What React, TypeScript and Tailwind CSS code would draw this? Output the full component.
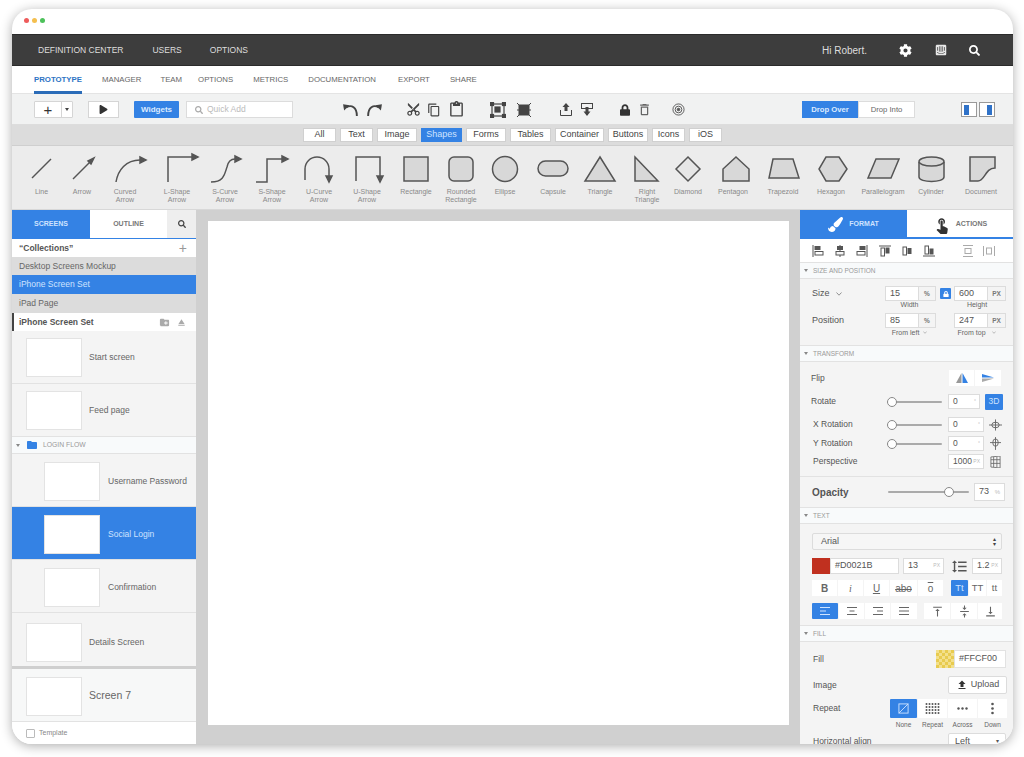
import { ReactNode } from "react";
import { FaCog, FaIntercom, FaLock, FaPaintBrush, FaPlay, FaSearch } from "react-icons/fa";
import {
  MdContentCopy,
  MdContentCut,
  MdContentPaste,
  MdCreateNewFolder,
  MdDeleteOutline,
  MdEject,
  MdFileUpload,
  MdFolder,
  MdFormatLineSpacing,
  MdTouchApp,
  MdVerticalAlignBottom,
  MdVerticalAlignCenter,
  MdVerticalAlignTop,
} from "react-icons/md";

const shapes: { label: string[]; w: string; art: ReactNode }[] = [
  { label: ["Line"], w: "w-[41px]", art: <path d="M20 26L39 7" fill="none" /> },
  { label: ["Arrow"], w: "w-[40px]", art: <><path d="M21 27L39 9" fill="none" /><polygon points="42,6 39,12 36,9" fill="#555" /></> },
  { label: ["Curved", "Arrow"], w: "w-[46px]", art: <><path d="M21 30C23 18 31 8 45 8" fill="none" /><polygon points="45,5 51,8 45,11" fill="#555" /></> },
  { label: ["L-Shape", "Arrow"], w: "w-[58px]", art: <><path d="M21 30V5H45" fill="none" /><polygon points="45,2 51,5 45,8" fill="#555" /></> },
  { label: ["S-Curve", "Arrow"], w: "w-[38px]", art: <><path d="M16 30C30 30 30 20 32 15C33 10 35 7 40 7" fill="none" /><polygon points="40,4 46,7 40,10" fill="#555" /></> },
  { label: ["S-Shape", "Arrow"], w: "w-[56px]", art: <><path d="M14 30H25V7H40" fill="none" /><polygon points="40,4 46,7 40,10" fill="#555" /></> },
  { label: ["U-Curve", "Arrow"], w: "w-[38px]", art: <><path d="M16 28V17A12 12 0 0 1 40 17V24" fill="none" /><polygon points="37,24 40,30 43,24" fill="#555" /></> },
  { label: ["U-Shape", "Arrow"], w: "w-[58px]", art: <><path d="M19 29V5H43V24" fill="none" /><polygon points="40,24 43,30 46,24" fill="#555" /></> },
  { label: ["Rectangle"], w: "w-[40px]", art: <rect x="18" y="5" width="24" height="24" /> },
  { label: ["Rounded", "Rectangle"], w: "w-[50px]", art: <rect x="18" y="5" width="24" height="24" rx="5" /> },
  { label: ["Ellipse"], w: "w-[38px]", art: <circle cx="30" cy="17" r="12.5" /> },
  { label: ["Capsule"], w: "w-[58px]", art: <rect x="15" y="9" width="30" height="15" rx="7.5" /> },
  { label: ["Triangle"], w: "w-[36px]", art: <polygon points="30,5 45,29 15,29" /> },
  { label: ["Right", "Triangle"], w: "w-[58px]", art: <polygon points="18,5 41,29 18,29" /> },
  { label: ["Diamond"], w: "w-[24px]", art: <polygon points="30,5 42,17 30,29 18,17" fill="#e6e6e6" /> },
  { label: ["Pentagon"], w: "w-[66px]", art: <polygon points="33,5 46,17 46,29 20,29 20,17" /> },
  { label: ["Trapezoid"], w: "w-[34px]", art: <polygon points="20,7 40,7 46,26 16,26" /> },
  { label: ["Hexagon"], w: "w-[62px]", art: <polygon points="25,5 38,5 46,17 38,29 25,29 18,17" /> },
  { label: ["Parallelogram"], w: "w-[42px]", art: <polygon points="23,7 46,7 38,26 15,26" /> },
  { label: ["Cylinder"], w: "w-[54px]", art: <><path d="M18 10V25C18 31 43 31 43 25V10" /><ellipse cx="30.5" cy="9.5" rx="12.5" ry="4.5" /></> },
  { label: ["Document"], w: "w-[46px]", art: <path d="M19 5H44V16C34 16 34 29 27 29H19Z" /> },
];

const categories = [
  { name: "All", w: "w-[33px]" },
  { name: "Text", w: "w-[33px]" },
  { name: "Image", w: "w-[40px]" },
  { name: "Shapes", w: "w-[41px]" },
  { name: "Forms", w: "w-[40px]" },
  { name: "Tables", w: "w-[41px]" },
  { name: "Container", w: "w-[49px]" },
  { name: "Buttons", w: "w-[40px]" },
  { name: "Icons", w: "w-[33px]" },
  { name: "iOS", w: "w-[33px]" },
];

function Thumb() {
  return <div className="w-[56px] h-[39px] shrink-0 bg-white border border-[#e3e3e3]" />;
}

function ScreenRow({ label, className, text }: { label: string; className: string; text?: string }) {
  return (
    <div className={`flex items-center shrink-0 h-[53px] border-b border-[#e2e2e2] ${className}`}>
      <Thumb />
      <span className={text ?? "text-[8.5px] text-[#666]"}>{label}</span>
    </div>
  );
}

function SectionHead({ title }: { title: string }) {
  return (
    <div className="h-[17px] shrink-0 flex items-center gap-[5px] pl-[4px] bg-[#f8fafb] border-y border-[#e2e2e2] text-[6.5px] text-[#999]">
      <span className="w-0 h-0 border-x-[2px] border-x-transparent border-t-[3px] border-t-[#888]" />
      {title}
    </div>
  );
}

function Field({ value, unit, className }: { value: string; unit?: string; className: string }) {
  return (
    <div className={`flex items-center h-[15px] bg-white border border-[#dcdcdc] text-[8.5px] text-[#555] ${className}`}>
      <span className="pl-[4px]">{value}</span>
      {unit && <span className="ml-auto pr-[3px] text-[5px] text-[#bbb]">{unit}</span>}
    </div>
  );
}

function UnitBox({ value, unit, w, uw }: { value: string; unit: string; w: string; uw: string }) {
  return (
    <div className="flex h-[15px] bg-white border border-[#dcdcdc] text-[9px] text-[#555]">
      <span className={`pl-[4px] leading-[13px] ${w}`}>{value}</span>
      <span className={`${uw} bg-[#f4f4f4] border-l border-[#dcdcdc] text-center text-[6.5px] font-bold leading-[13px] text-[#777]`}>{unit}</span>
    </div>
  );
}

function Slider({ w, thumb }: { w: string; thumb: string }) {
  return (
    <div className={`relative h-[10px] ${w}`}>
      <div className="absolute left-0 right-0 top-[4px] h-[2px] rounded bg-[#aaaaaa]" />
      <div className={`absolute top-0 w-[10px] h-[10px] rounded-full bg-white border border-[#888] ${thumb}`} />
    </div>
  );
}

function Seg({ children, className, active }: { children: ReactNode; className: string; active?: boolean }) {
  return (
    <div className={`flex items-center justify-center h-[16px] ${active ? "bg-[#3482e4] text-[#cfe3ff] rounded-[1px]" : "bg-white text-[#666]"} ${className}`}>
      {children}
    </div>
  );
}

function Chevron({ className }: { className: string }) {
  return (
    <svg viewBox="0 0 6 4" className={`inline-block ${className}`} fill="none" stroke="currentColor" strokeWidth="0.8">
      <path d="M0.5 0.5L3 3.2L5.5 0.5" />
    </svg>
  );
}

function AlignShape({ kind }: { kind: "left" | "center" | "right" | "top" | "middle" | "bottom" }) {
  return (
    <svg viewBox="0 0 12 12" className="w-[12px] h-[12px]" fill="none" stroke="#555" strokeWidth="1">
      {kind === "left" && <><path d="M1 0V12" /><rect x="3" y="1.5" width="5" height="3" fill="#555" /><rect x="3" y="6.5" width="8" height="3.5" /></>}
      {kind === "center" && <><path d="M6 0V12" /><rect x="3.5" y="1.5" width="5" height="3" fill="#555" /><rect x="2" y="6.5" width="8" height="3.5" fill="#f4f4f4" /></>}
      {kind === "right" && <><path d="M11 0V12" /><rect x="4" y="1.5" width="5" height="3" fill="#555" /><rect x="1" y="6.5" width="8" height="3.5" /></>}
      {kind === "top" && <><path d="M0 1H12" /><rect x="2" y="3" width="3.5" height="8" /><rect x="7" y="3" width="3" height="5" fill="#555" /></>}
      {kind === "middle" && <><rect x="2" y="2" width="3.5" height="8" /><rect x="7" y="3.5" width="3" height="5" fill="#555" /></>}
      {kind === "bottom" && <><path d="M0 11H12" /><rect x="2" y="1" width="3.5" height="8" /><rect x="7" y="4" width="3" height="5" fill="#555" /></>}
    </svg>
  );
}

function Bars({ kind }: { kind: "left" | "center" | "right" | "justify" }) {
  const mid = { left: "M1 5H7", center: "M3.5 5H8.5", right: "M5 5H11", justify: "M1 5H11" }[kind];
  return (
    <svg viewBox="0 0 12 10" className="w-[12px] h-[10px]" fill="none" stroke="currentColor" strokeWidth="1.2">
      <path d={`M1 1.5H11${mid}M1 8.5H11`} />
    </svg>
  );
}

function Toolbar() {
  return (
    <div className="h-[31px] shrink-0 flex items-center pl-[22px] pt-[1px] bg-[#f1f2f2] border-b border-[#ddd] text-[#444]">
      <div className="flex w-[39px] h-[17px] bg-white border border-[#d5d5d5] rounded-[1px]">
        <span className="w-[26px] flex items-center justify-center text-[15px] leading-none text-[#333]">+</span>
        <span className="flex-1 border-l border-[#d5d5d5] flex items-center justify-center">
          <span className="w-0 h-0 border-x-[2px] border-x-transparent border-t-[3px] border-t-[#444]" />
        </span>
      </div>
      <div className="ml-[15px] w-[31px] h-[17px] flex items-center justify-center bg-white border border-[#d5d5d5]">
        <FaPlay className="w-[9px] h-[9px] text-[#333]" />
      </div>
      <div className="ml-[15px] w-[45px] h-[17px] flex items-center justify-center bg-[#3482e4] rounded-[1px] text-[8px] font-bold text-[#dcebff]">Widgets</div>
      <div className="ml-[7px] w-[107px] h-[17px] flex items-center gap-[4px] pl-[8px] bg-white border border-[#dcdcdc] text-[8.5px] text-[#bbb]">
        <FaSearch className="w-[8px] h-[8px] text-[#aaa]" />
        Quick Add
      </div>
      <svg viewBox="0 0 16 14" className="ml-[49px] w-[17px] h-[15px]" fill="none" stroke="#444" strokeWidth="1.8">
        <path d="M4 5C9 2 14 5 14 13" />
        <polygon points="1,2 7,3 2,8" fill="#444" stroke="none" />
      </svg>
      <svg viewBox="0 0 16 14" className="ml-[7px] w-[17px] h-[15px] -scale-x-100" fill="none" stroke="#444" strokeWidth="1.8">
        <path d="M4 5C9 2 14 5 14 13" />
        <polygon points="1,2 7,3 2,8" fill="#444" stroke="none" />
      </svg>
      <MdContentCut className="ml-[23px] w-[15px] h-[15px] -rotate-90" />
      <MdContentCopy className="ml-[6px] w-[14px] h-[14px]" />
      <MdContentPaste className="ml-[7px] w-[17px] h-[17px]" />
      <svg viewBox="0 0 16 16" className="ml-[25px] w-[16px] h-[16px]" fill="none" stroke="#444" strokeWidth="1.2">
        <rect x="2" y="2" width="12" height="12" />
        <rect x="0.5" y="0.5" width="3" height="3" fill="#444" />
        <rect x="12.5" y="0.5" width="3" height="3" fill="#444" />
        <rect x="0.5" y="12.5" width="3" height="3" fill="#444" />
        <rect x="12.5" y="12.5" width="3" height="3" fill="#444" />
        <rect x="5" y="5" width="5" height="5" fill="#444" />
      </svg>
      <svg viewBox="0 0 16 16" className="ml-[10px] w-[16px] h-[16px]" fill="#444" stroke="#444" strokeWidth="1">
        <rect x="3" y="3" width="10" height="10" />
        <path d="M1 1L4 4M15 1L12 4M1 15L4 12M15 15L12 12M1 8H3M13 8H15" fill="none" />
      </svg>
      <svg viewBox="0 0 14 15" className="ml-[27px] w-[14px] h-[15px]" fill="#444" stroke="#444">
        <path d="M7 1L10.5 5H8.5V9H5.5V5H3.5Z" stroke="none" />
        <path d="M1.5 8V13.5H12.5V8" fill="none" />
      </svg>
      <svg viewBox="0 0 14 15" className="ml-[7px] w-[14px] h-[15px]" fill="#444" stroke="#444">
        <rect x="1.5" y="1.5" width="11" height="5" fill="none" />
        <path d="M7 14L3.5 9.5H5.5V5H8.5V9.5H10.5Z" stroke="none" />
      </svg>
      <FaLock className="ml-[26px] w-[10px] h-[12px] text-[#333]" />
      <MdDeleteOutline className="ml-[7px] w-[15px] h-[15px] text-[#666]" />
      <svg viewBox="0 0 14 14" className="ml-[20px] w-[13px] h-[13px]" fill="none" stroke="#555">
        <circle cx="7" cy="7" r="6" />
        <circle cx="7" cy="7" r="3.6" />
        <circle cx="7" cy="7" r="1.4" fill="#555" />
      </svg>
      <div className="ml-[117px] flex w-[113px] h-[17px] text-[7.7px]">
        <div className="w-[56px] flex items-center justify-center bg-[#3482e4] font-bold text-[#dcebff]">Drop Over</div>
        <div className="flex-1 flex items-center justify-center bg-white border border-[#dcdcdc] text-[#666]">Drop Into</div>
      </div>
      <div className="ml-[46px] w-[16px] h-[15px] flex justify-start pl-[2px] items-center bg-white border border-[#999]">
        <span className="w-[5px] h-[10px] bg-[#2f72c8]" />
      </div>
      <div className="ml-[2px] w-[16px] h-[15px] flex justify-end pr-[2px] items-center bg-white border border-[#999]">
        <span className="w-[5px] h-[10px] bg-[#2f72c8]" />
      </div>
    </div>
  );
}

function LeftPanel() {
  return (
    <div className="w-[184px] shrink-0 flex flex-col bg-[#f4f4f4] overflow-hidden">
      <div className="h-[29px] shrink-0 flex text-[7px] font-bold">
        <div className="w-[78px] flex items-center justify-center bg-[#3482e4] text-[#cfe3ff]">SCREENS</div>
        <div className="w-[77px] flex items-center justify-center bg-white border-b border-[#3482e4] text-[#777]">OUTLINE</div>
        <div className="flex-1 flex items-center justify-center bg-[#eeeeee] border-b border-[#3482e4]">
          <FaSearch className="w-[8px] h-[8px] text-[#444]" />
        </div>
      </div>
      <div className="h-[18px] shrink-0 flex items-center justify-between pl-[7px] pr-[9px] bg-white text-[8.5px] font-bold text-[#555]">
        <span>“Collections”</span>
        <span className="text-[14px] font-normal leading-none text-[#999]">+</span>
      </div>
      <div className="h-[18px] shrink-0 flex items-center pl-[7px] bg-[#dcdcdc] text-[8.5px] text-[#666]">Desktop Screens Mockup</div>
      <div className="h-[19px] shrink-0 flex items-center pl-[7px] bg-[#3482e4] text-[8.5px] text-[#cfe3ff]">iPhone Screen Set</div>
      <div className="h-[19px] shrink-0 flex items-center pl-[7px] bg-[#dcdcdc] text-[8.5px] text-[#666]">iPad Page</div>
      <div className="h-[18px] shrink-0 flex items-center pl-[5px] pr-[9px] bg-white border-l-2 border-[#444] text-[8.5px] font-bold text-[#555]">
        <span>iPhone Screen Set</span>
        <MdCreateNewFolder className="ml-auto w-[11px] h-[11px] text-[#aaa]" />
        <MdEject className="ml-[6px] w-[11px] h-[11px] text-[#aaa]" />
      </div>
      <ScreenRow label="Start screen" className="pl-[14px] pt-[1px] gap-[7px]" />
      <ScreenRow label="Feed page" className="pl-[14px] pt-[1px] gap-[7px]" />
      <div className="h-[17px] shrink-0 flex items-center pl-[4px] bg-[#f8fafb] border-b border-[#e2e2e2] text-[6.8px] text-[#999]">
        <span className="w-0 h-0 border-x-[2px] border-x-transparent border-t-[3px] border-t-[#888]" />
        <MdFolder className="ml-[6px] w-[12px] h-[12px] text-[#3482e4]" />
        <span className="ml-[5px]">LOGIN FLOW</span>
      </div>
      <ScreenRow label="Username Password" className="pl-[32px] pt-[2px] gap-[8px]" />
      <ScreenRow label="Social Login" className="pl-[32px] pt-[2px] gap-[8px] bg-[#3482e4] border-[#3482e4]" text="text-[8.5px] text-[#cfe3ff]" />
      <ScreenRow label="Confirmation" className="pl-[32px] pt-[2px] gap-[8px]" />
      <ScreenRow label="Details Screen" className="pl-[14px] pt-[6px] gap-[7px] border-b-0" />
      <div className="h-[3px] shrink-0 bg-[#cfcfcf]" />
      <ScreenRow label="Screen 7" className="pl-[14px] pt-[2px] gap-[7px] bg-[#f7f8f8]" text="text-[10.5px] text-[#666]" />
      <div className="flex-1 flex items-center gap-[4px] pl-[14px] bg-white text-[7px] text-[#888]">
        <span className="w-[9px] h-[9px] rounded-[1px] border border-[#bbb]" />
        Template
      </div>
    </div>
  );
}

function RightPanel() {
  return (
    <div className="w-[213px] shrink-0 flex flex-col bg-[#f4f4f4] overflow-hidden">
      <div className="h-[29px] shrink-0 flex text-[7px] font-bold">
        <div className="w-[107px] flex items-center justify-center gap-[6px] bg-[#3482e4] text-[#cfe3ff]">
          <FaPaintBrush className="w-[15px] h-[15px] text-white" />
          FORMAT
        </div>
        <div className="flex-1 flex items-center justify-center gap-[5px] pt-[2px] bg-white border-b-2 border-[#3482e4] text-[#777]">
          <MdTouchApp className="w-[18px] h-[18px] text-[#333]" />
          ACTIONS
        </div>
      </div>
      <div className="h-[23px] shrink-0 flex items-center gap-[10px] pl-[12px] bg-white">
        <AlignShape kind="left" />
        <AlignShape kind="center" />
        <AlignShape kind="right" />
        <div className="ml-[1px]"><AlignShape kind="top" /></div>
        <AlignShape kind="middle" />
        <AlignShape kind="bottom" />
        <svg viewBox="0 0 10 12" className="ml-[18px] w-[10px] h-[12px]" fill="none" stroke="#aaa"><path d="M0 0.5H10M0 11.5H10" /><rect x="2" y="3.5" width="6" height="5" /></svg>
        <svg viewBox="0 0 12 10" className="w-[12px] h-[10px]" fill="none" stroke="#aaa"><path d="M0.5 0V10M11.5 0V10" /><rect x="3.5" y="2" width="5" height="6" /></svg>
      </div>
      <SectionHead title="SIZE AND POSITION" />
      <div className="h-[66px] shrink-0 pt-[7px] pl-[12px] text-[8.5px] text-[#555]">
        <div className="flex items-center">
          <span className="w-[73px] flex items-center gap-[6px] text-[9px]">Size <Chevron className="w-[6px] h-[4px] text-[#777]" /></span>
          <UnitBox value="15" unit="%" w="w-[32px]" uw="w-[17px]" />
          <div className="ml-[4px] w-[11px] h-[11px] flex items-center justify-center bg-[#3482e4] rounded-[1px]">
            <FaLock className="w-[6px] h-[6px] text-white" />
          </div>
          <div className="ml-[3px]"><UnitBox value="600" unit="PX" w="w-[32px]" uw="w-[18px]" /></div>
        </div>
        <div className="flex text-[7px] leading-[8px] text-[#666] h-[12px] items-start">
          <span className="ml-[73px] w-[49px] text-center">Width</span>
          <span className="ml-[18px] w-[50px] text-center">Height</span>
        </div>
        <div className="flex items-center">
          <span className="w-[73px] text-[9px]">Position</span>
          <UnitBox value="85" unit="%" w="w-[32px]" uw="w-[17px]" />
          <div className="ml-[18px]"><UnitBox value="247" unit="PX" w="w-[32px]" uw="w-[18px]" /></div>
        </div>
        <div className="flex text-[7px] text-[#666] h-[10px] items-center">
          <span className="ml-[73px] w-[49px] text-center">From left <Chevron className="ml-[2px] w-[4px] h-[3px] text-[#888]" /></span>
          <span className="ml-[18px] w-[50px] text-center">From top <Chevron className="ml-[5px] w-[4px] h-[3px] text-[#888]" /></span>
        </div>
      </div>
      <SectionHead title="TRANSFORM" />
      <div className="h-[114px] shrink-0 pl-[11px] text-[8.5px] text-[#555]">
        <div className="flex items-center h-[16px] mt-[8px]">
          <span className="w-[138px]">Flip</span>
          <Seg className="w-[25px]">
            <svg viewBox="0 0 14 10" className="w-[14px] h-[10px]"><path d="M6.5 0V10H1Z" fill="#999" /><path d="M7.5 0V10H13Z" fill="#3482e4" /></svg>
          </Seg>
          <Seg className="ml-[1px] w-[26px]">
            <svg viewBox="0 0 14 10" className="w-[14px] h-[10px]"><path d="M1 1L13 4.5H1Z" fill="#3482e4" /><path d="M1 5.5H13L1 9Z" fill="#aaa" /></svg>
          </Seg>
        </div>
        <div className="flex items-center h-[15px] mt-[8px]">
          <span className="w-[76px]">Rotate</span>
          <Slider w="w-[55px]" thumb="left-0" />
          <Field value="0" unit="°" className="ml-[6px] w-[32px]" />
          <Seg active className="ml-[5px] w-[18px] h-[15px] text-[8.5px]">3D</Seg>
        </div>
        <div className="flex items-center h-[15px] mt-[8px]">
          <span className="w-[76px] pl-[2px]">X Rotation</span>
          <Slider w="w-[55px]" thumb="left-0" />
          <Field value="0" unit="°" className="ml-[6px] w-[36px]" />
          <svg viewBox="0 0 14 12" className="ml-[5px] w-[13px] h-[12px]" fill="none" stroke="#666"><path d="M0 6H14M7 0V12" /><ellipse cx="7" cy="6" rx="4" ry="3" /></svg>
        </div>
        <div className="flex items-center h-[15px] mt-[4px]">
          <span className="w-[76px] pl-[2px]">Y Rotation</span>
          <Slider w="w-[55px]" thumb="left-0" />
          <Field value="0" unit="°" className="ml-[6px] w-[36px]" />
          <svg viewBox="0 0 12 14" className="ml-[6px] w-[11px] h-[13px]" fill="none" stroke="#666"><path d="M6 0V14M0 6H12" /><ellipse cx="6" cy="6" rx="3" ry="4" /></svg>
        </div>
        <div className="flex items-center h-[15px] mt-[3px]">
          <span className="w-[137px] pl-[2px]">Perspective</span>
          <Field value="1000" unit="PX" className="w-[36px]" />
          <svg viewBox="0 0 12 13" className="ml-[6px] w-[11px] h-[12px]" fill="none" stroke="#666" strokeWidth="0.9"><path d="M1 1L11 0V13L1 12ZM4 1V12M7.5 1V12M1 4H11M1 8H11" /></svg>
        </div>
      </div>
      <div className="h-[31px] shrink-0 flex items-center pl-[12px] border-t border-[#e2e2e2] text-[10px] font-bold text-[#555]">
        <span className="w-[76px]">Opacity</span>
        <Slider w="w-[81px]" thumb="left-[56px]" />
        <div className="ml-[5px] w-[31px] h-[18px] flex items-center justify-between px-[4px] bg-white border border-[#dcdcdc] text-[9px] font-normal">
          73<span className="text-[6px] text-[#bbb]">%</span>
        </div>
      </div>
      <SectionHead title="TEXT" />
      <div className="h-[101px] shrink-0 pl-[12px] text-[#555]">
        <div className="mt-[9px] w-[190px] h-[17px] flex items-center justify-between pl-[8px] pr-[5px] bg-[#f6f6f6] border border-[#dcdcdc] rounded-[2px] text-[9px]">
          Arial
          <span className="text-[6px] leading-[5px] text-[#444]">▴<br />▾</span>
        </div>
        <div className="mt-[8px] flex items-center h-[16px]">
          <span className="w-[18px] h-[16px] bg-[#c0301f]" />
          <div className="w-[69px] h-[16px] flex items-center pl-[4px] bg-white border border-[#dcdcdc] text-[9px]">#D0021B</div>
          <Field value="13" unit="PX" className="ml-[4px] w-[41px] h-[16px] text-[9px]" />
          <MdFormatLineSpacing className="ml-[7px] w-[17px] h-[17px]" />
          <Field value="1.2" unit="PX" className="ml-[4px] w-[30px] h-[16px] text-[9px]" />
        </div>
        <div className="mt-[6px] flex items-center gap-[1px]">
          <Seg className="w-[25px] font-bold text-[10px]">B</Seg>
          <Seg className="w-[25px] italic text-[10px] font-['Liberation_Serif',serif]">i</Seg>
          <Seg className="w-[25px] underline text-[10px]">U</Seg>
          <Seg className="w-[27px] line-through text-[10px]">abo</Seg>
          <Seg className="w-[25px] overline text-[10px]">o</Seg>
          <Seg active className="ml-[7px] w-[17px] text-[9.5px]">Tt</Seg>
          <Seg className="w-[17px] text-[9.5px]">TT</Seg>
          <Seg className="w-[15px] text-[9.5px]">tt</Seg>
        </div>
        <div className="mt-[7px] flex items-center gap-[1px]">
          <Seg active className="w-[26px]"><Bars kind="left" /></Seg>
          <Seg className="w-[25px]"><Bars kind="center" /></Seg>
          <Seg className="w-[25px]"><Bars kind="right" /></Seg>
          <Seg className="w-[26px]"><Bars kind="justify" /></Seg>
          <Seg className="ml-[6px] w-[26px] text-[#444]"><MdVerticalAlignTop className="w-[13px] h-[13px]" /></Seg>
          <Seg className="w-[26px] text-[#444]"><MdVerticalAlignCenter className="w-[13px] h-[13px]" /></Seg>
          <Seg className="w-[24px] text-[#444]"><MdVerticalAlignBottom className="w-[13px] h-[13px]" /></Seg>
        </div>
      </div>
      <SectionHead title="FILL" />
      <div className="pl-[13px] text-[8.5px] text-[#555]">
        <div className="mt-[8px] flex items-center h-[18px]">
          <span className="w-[123px]">Fill</span>
          <span className="w-[18px] h-[18px] bg-[#ecd25e] bg-[repeating-conic-gradient(#e8cb4f_0_25%,#f3e08c_0_50%)] bg-[length:6px_6px]" />
          <div className="w-[52px] h-[18px] flex items-center pl-[4px] bg-white border border-[#e2e2e2] text-[9px]">#FFCF00</div>
        </div>
        <div className="mt-[8px] flex items-center h-[18px]">
          <span className="w-[135px]">Image</span>
          <div className="w-[59px] h-[18px] flex items-center justify-center gap-[3px] bg-white border border-[#dcdcdc] rounded-[2px] text-[9px]">
            <MdFileUpload className="w-[12px] h-[12px] text-[#333]" />Upload
          </div>
        </div>
        <div className="mt-[5px] flex items-start">
          <span className="w-[77px] mt-[3px]">Repeat</span>
          <div className="flex gap-[1px] text-[6.5px] text-[#666] text-center">
            <div className="w-[27px]">
              <Seg active className="h-[19px]">
                <svg viewBox="0 0 12 12" className="w-[11px] h-[11px]" fill="none" stroke="#cfe3ff"><rect x="1" y="1" width="10" height="10" /><path d="M1 11L11 1" /></svg>
              </Seg>
              <div className="mt-[2px]">None</div>
            </div>
            <div className="w-[29px]">
              <Seg className="h-[19px]">
                <svg viewBox="0 0 15 11" className="w-[15px] h-[11px]" fill="#555">
                  {[1, 4, 7, 10].map((y) => [1.5, 4.5, 7.5, 10.5, 13.5].map((x) => <circle key={`${x}-${y}`} cx={x} cy={y} r="1" />))}
                </svg>
              </Seg>
              <div className="mt-[2px]">Repeat</div>
            </div>
            <div className="w-[29px]">
              <Seg className="h-[19px]">
                <svg viewBox="0 0 11 3" className="w-[11px] h-[3px]" fill="#555"><circle cx="1.5" cy="1.5" r="1.2" /><circle cx="5.5" cy="1.5" r="1.2" /><circle cx="9.5" cy="1.5" r="1.2" /></svg>
              </Seg>
              <div className="mt-[2px]">Across</div>
            </div>
            <div className="w-[29px]">
              <Seg className="h-[19px]">
                <svg viewBox="0 0 3 13" className="w-[3px] h-[13px]" fill="#555"><circle cx="1.5" cy="2" r="1.3" /><circle cx="1.5" cy="6.5" r="1.3" /><circle cx="1.5" cy="11" r="1.3" /></svg>
              </Seg>
              <div className="mt-[2px]">Down</div>
            </div>
          </div>
        </div>
        <div className="mt-[3px] flex items-center h-[18px]">
          <span className="w-[135px] whitespace-nowrap">Horizontal align</span>
          <div className="w-[58px] h-[18px] flex items-center justify-between px-[6px] bg-white border border-[#dcdcdc] rounded-[2px] text-[9px]">
            Left<span className="text-[6px]">▾</span>
          </div>
        </div>
      </div>
    </div>
  );
}

export default function App() {
  return (
    <div className="w-[1024px] h-[757px] bg-white pt-[9px] pl-[12px] font-['Liberation_Sans',Arial,sans-serif] overflow-hidden">
      <div className="w-[1001px] h-[735px] flex flex-col rounded-[20px] overflow-hidden bg-white shadow-[0_2px_12px_rgba(0,0,0,0.32)]">
        <div className="h-[25px] shrink-0 flex items-center gap-[3px] pl-[12px] pb-[3px]">
          <span className="w-[5px] h-[5px] rounded-full bg-[#ee5b5b]" />
          <span className="w-[5px] h-[5px] rounded-full bg-[#f4bf4f]" />
          <span className="w-[5px] h-[5px] rounded-full bg-[#4cc15a]" />
        </div>
        <div className="h-[32px] shrink-0 flex items-center pl-[26px] bg-[#3d3d3d] border-y border-[#2b2b2b] text-[8.5px] text-[#dddddd]">
          <span>DEFINITION CENTER</span>
          <span className="ml-[29px]">USERS</span>
          <span className="ml-[28px]">OPTIONS</span>
          <span className="ml-auto text-[10px]">Hi Robert.</span>
          <FaCog className="ml-[32px] w-[13px] h-[13px] text-white" />
          <FaIntercom className="ml-[23px] w-[12px] h-[12px] text-[#e8e8e8]" />
          <FaSearch className="ml-[22px] mr-[33px] w-[11px] h-[11px] text-white" />
        </div>
        <div className="h-[28px] shrink-0 flex items-center pl-[22px] bg-white border-b border-[#e4e4e4] text-[7.8px] text-[#666]">
          <span className="relative font-bold text-[#2e74c4]">
            PROTOTYPE
            <span className="absolute left-0 right-0 top-[17px] h-[3px] bg-[#2b6cb8]" />
          </span>
          <span className="ml-[20px]">MANAGER</span>
          <span className="ml-[19px]">TEAM</span>
          <span className="ml-[16px]">OPTIONS</span>
          <span className="ml-[20px]">METRICS</span>
          <span className="ml-[20px]">DOCUMENTATION</span>
          <span className="ml-[22px]">EXPORT</span>
          <span className="ml-[20px]">SHARE</span>
        </div>
        <Toolbar />
        <div className="h-[21px] shrink-0 flex items-center gap-[4px] pl-[291px] bg-[#dcdcdc] border-b border-[#cfcfcf] text-[9px] text-[#444]">
          {categories.map((c) => (
            <div
              key={c.name}
              className={`h-[14px] flex items-center justify-center border ${c.w} ${c.name === "Shapes" ? "bg-[#3482e4] border-[#3482e4] text-[#cfe3ff]" : "bg-white border-[#d0d0d0]"}`}
            >
              {c.name}
            </div>
          ))}
        </div>
        <div className="h-[64px] shrink-0 flex pl-[9px] pt-[6px] bg-[#ececec] border-b border-[#d8d8d8]">
          {shapes.map((s) => (
            <div key={s.label.join(" ")} className={`flex flex-col items-center shrink-0 ${s.w}`}>
              <svg viewBox="0 0 60 34" className="w-[60px] h-[34px] shrink-0" fill="#d8d8d8" stroke="#555" strokeWidth="1.5">
                {s.art}
              </svg>
              <div className="mt-[2px] text-center text-[7px] leading-[8px] text-[#8a8a8a] whitespace-nowrap">
                {s.label.map((l) => (
                  <div key={l}>{l}</div>
                ))}
              </div>
            </div>
          ))}
        </div>
        <div className="flex-1 min-h-0 flex">
          <LeftPanel />
          <div className="flex-1 pt-[11px] pl-[12px] bg-[#d0d0d0]">
            <div className="w-[581px] h-[504px] bg-white" />
          </div>
          <RightPanel />
        </div>
      </div>
    </div>
  );
}
